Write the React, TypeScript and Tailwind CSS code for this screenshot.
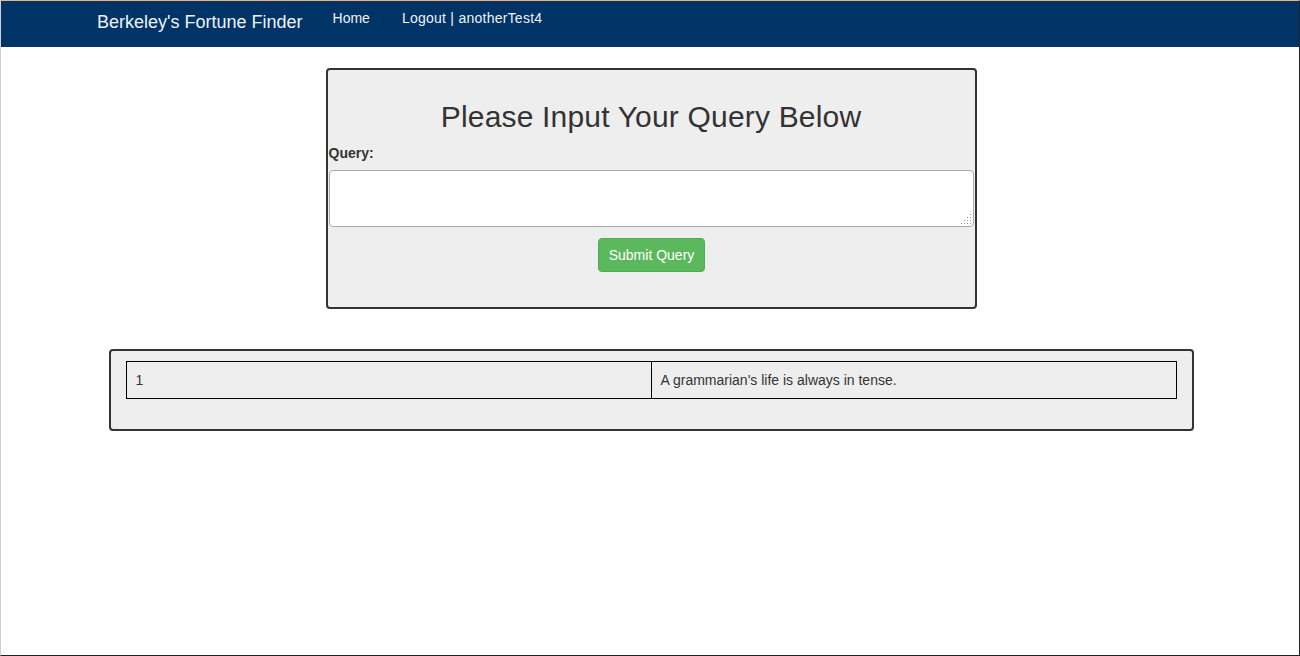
import React from "react";

const fortunes = [{ id: 1, text: "A grammarian's life is always in tense." }];

// little dotted grip the old chrome shows on textareas
function ResizeGrip() {
  const dots: Array<[number, number]> = [];
  for (let r = 0; r < 4; r++) {
    for (let c = 3 - r; c < 4; c++) dots.push([c * 3 + 0.5, r * 3 + 0.5]);
  }
  return (
    <svg width="11" height="11" viewBox="0 0 11 11" className="pointer-events-none absolute bottom-[2px] right-[2px]">
      {dots.map(([x, y]) => (
        <rect key={`${x}-${y}`} x={x - 0.5} y={y - 0.5} width="1" height="1" fill="#9a9a9a" />
      ))}
    </svg>
  );
}

export default function App() {
  return (
    <div className="h-screen box-border border-t border-t-[#f2b27a] border-l border-l-[#d6cfcf] border-r border-r-[#222] border-b border-b-[#222] bg-white font-['Liberation_Sans',Arial,sans-serif] text-[14px] text-[#333]">
      {/* Navbar */}
      <nav className="h-[46px] bg-[#003366]">
        <div className="mx-auto flex w-[1170px] items-start pl-[17px] pr-[15px]">
          <a href="#" className="px-[15px] pt-[11px] text-[18px] leading-[20px] text-[#eef2f7]">
            Berkeley's Fortune Finder
          </a>
          <a href="#" className="px-[15px] pt-[7px] leading-[20px] text-[#eef2f7]">
            Home
          </a>
          <a href="#" className="px-[17px] pt-[7px] leading-[20px] tracking-[0.25px] text-[#eef2f7]">
            Logout | anotherTest4
          </a>
        </div>
      </nav>

      {/* Query form */}
      <div className="mx-auto mt-[21px] w-[651px] translate-x-[1px] rounded-[4px] border-2 border-[#333] bg-[#eeeeee] pb-[35px] pt-[30px]">
        <h2 className="text-center text-[30px] leading-[33px] tracking-[0.18px] text-[#333]">
          Please Input Your Query Below
        </h2>
        <label className="ml-px mt-[10px] block font-bold leading-[20px]">Query:</label>
        <div className="relative mx-px mt-[7px]">
          <textarea className="block h-[57px] w-full resize-none rounded-[4px] border border-[#aaa] bg-white px-3 py-1.5 outline-none" />
          <ResizeGrip />
        </div>
        <div className="mt-[11px] flex justify-center">
          <button className="ml-px h-[34px] rounded-[4px] border border-[#4cae4c] bg-[#5cb85c] px-[10px] leading-[20px] text-white">
            Submit Query
          </button>
        </div>
      </div>

      {/* Results */}
      <div className="mx-auto mt-[40px] w-[1085px] translate-x-[1px] rounded-[4px] border-2 border-[#333] bg-[#eeeeee] px-[15px] pb-[10px] pt-[10px]">
        <table className="mb-[20px] w-full table-fixed border-collapse">
          <tbody>
            {fortunes.map((f) => (
              <tr key={f.id}>
                <td className="w-1/2 border border-black py-[8px] pl-[9px] pr-[8px] leading-[20px] text-[#333]">{f.id}</td>
                <td className="w-1/2 border border-black py-[8px] pl-[9px] pr-[8px] leading-[20px]">{f.text}</td>
              </tr>
            ))}
          </tbody>
        </table>
      </div>
    </div>
  );
}
